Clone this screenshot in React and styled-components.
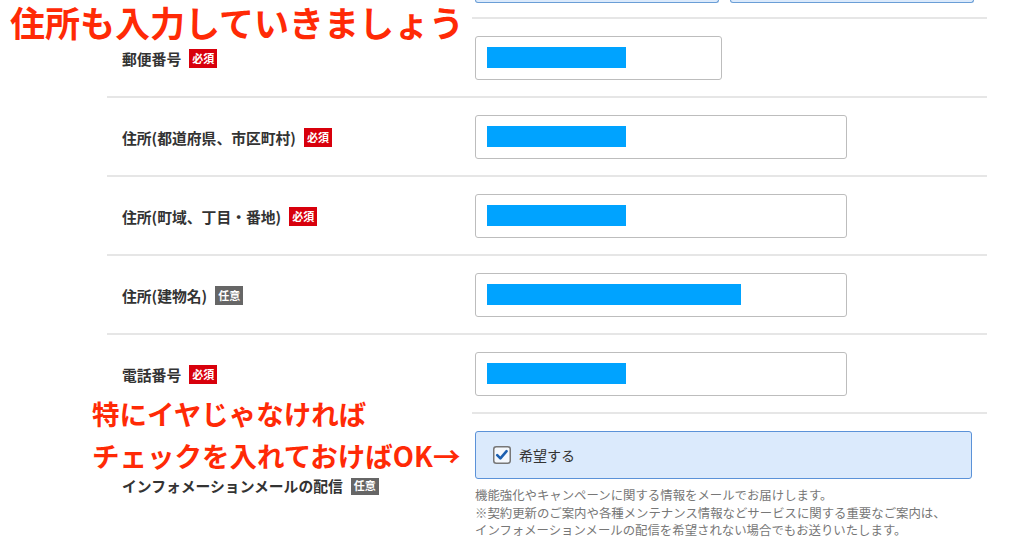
import React from "react";
import styled, { createGlobalStyle } from "styled-components";

const GlobalStyle = createGlobalStyle`
  body {
    margin: 0;
    background: #fff;
    font-family: "Noto Sans CJK JP", "Noto Sans", sans-serif;
    color: #333;
  }
`;

const Page = styled.div`
  position: relative;
  width: 1024px;
  height: 548px;
  overflow: hidden;
`;

const Form = styled.div`
  margin-left: 107px;
  width: 880px;
`;

const TopStrip = styled.div`
  display: flex;
  gap: 11px;
  height: 17px;
  padding-left: 368px;
  border-bottom: 2px solid #e6e6e6;
`;

const CutBox = styled.div`
  width: 242px;
  height: 2px;
  border: 1px solid #6a9ed6;
  border-top: none;
  border-radius: 0 0 3px 3px;
  background: #dbeafc;
`;

const Row = styled.div`
  display: grid;
  grid-template-columns: 368px 1fr;
  align-items: center;
  padding: 17px 0 ${(p) => (p.last ? "20px" : "16px")};
  border-bottom: ${(p) => (p.last ? "none" : "2px solid #e6e6e6")};
`;

const Label = styled.div`
  display: flex;
  align-items: center;
  padding-left: 15px;
  font-size: 14.8px;
  font-weight: bold;
  color: #333;
  white-space: nowrap;
`;

const Badge = styled.span`
  margin-left: 8px;
  padding: 3px 3px;
  font-size: 11px;
  line-height: 13px;
  font-weight: bold;
  color: #fff;
  background: ${(p) => (p.optional ? "#666" : "#d8000c")};
`;

const Input = styled.div`
  box-sizing: border-box;
  width: ${(p) => p.w}px;
  height: 44px;
  padding: 10px 11px;
  border: 1px solid #bdbdbd;
  border-radius: 3px;
  background: #fff;
`;

const Filled = styled.div`
  height: 21px;
  width: ${(p) => p.w}px;
  background: #00a3ff;
`;

const Choice = styled.label`
  box-sizing: border-box;
  display: flex;
  align-items: center;
  gap: 8px;
  width: 497px;
  height: 48px;
  padding-left: 17px;
  border: 1px solid #5b92d8;
  border-radius: 3px;
  background: #dbeafc;
  font-size: 14px;
  color: #333;
`;

const Help = styled.p`
  margin: 8px 0 0;
  font-size: 12.4px;
  line-height: 17.5px;
  color: #777;
  white-space: nowrap;
`;

const Note = styled.div`
  position: absolute;
  left: ${(p) => p.x}px;
  top: ${(p) => p.y}px;
  padding: ${(p) => p.pad};
  background: #fff;
  color: #ff2a06;
  font-weight: bold;
  font-size: ${(p) => p.size}px;
  line-height: ${(p) => p.lh}px;
  white-space: nowrap;
`;

const Check = () => (
  <svg width="18" height="18" viewBox="0 0 18 18">
    <rect x="0.75" y="0.75" width="16.5" height="16.5" rx="2.5" fill="#f4f8fd" stroke="#777" strokeWidth="1.5" />
    <path d="M4.2 9.2 L7.4 12.4 L13.6 5.2" fill="none" stroke="#1c5fb0" strokeWidth="2.6" strokeLinecap="round" strokeLinejoin="round" />
  </svg>
);

const fields = [
  { label: "郵便番号", w: 247, fill: 139 },
  { label: "住所(都道府県、市区町村)", w: 372, fill: 139 },
  { label: "住所(町域、丁目・番地)", w: 372, fill: 139 },
  { label: "住所(建物名)", w: 372, fill: 254, optional: true },
  { label: "電話番号", w: 372, fill: 139 },
];

export default function App() {
  return (
    <Page>
      <GlobalStyle />
      <Form>
        <TopStrip>
          <CutBox />
          <CutBox />
        </TopStrip>
        {fields.map((f) => (
          <Row key={f.label}>
            <Label>
              {f.label}
              <Badge optional={f.optional}>{f.optional ? "任意" : "必須"}</Badge>
            </Label>
            <Input w={f.w}>
              <Filled w={f.fill} />
            </Input>
          </Row>
        ))}
        <Row last>
          <Label>
            インフォメーションメールの配信
            <Badge optional>任意</Badge>
          </Label>
          <div>
            <Choice>
              <Check />
              希望する
            </Choice>
            <Help>
              機能強化やキャンペーンに関する情報をメールでお届けします。
              <br />
              ※契約更新のご案内や各種メンテナンス情報などサービスに関する重要なご案内は、
              <br />
              インフォメーションメールの配信を希望されない場合でもお送りいたします。
            </Help>
          </div>
        </Row>
      </Form>
      <Note x={0} y={2} pad="0 8px 2px 10px" size={35} lh={40}>
        住所も入力していきましょう
      </Note>
      <Note x={88} y={392} pad="0 12px 2px 4px" size={27.5} lh={42}>
        特にイヤじゃなければ
        <br />
        チェックを入れておけばOK→
      </Note>
    </Page>
  );
}
